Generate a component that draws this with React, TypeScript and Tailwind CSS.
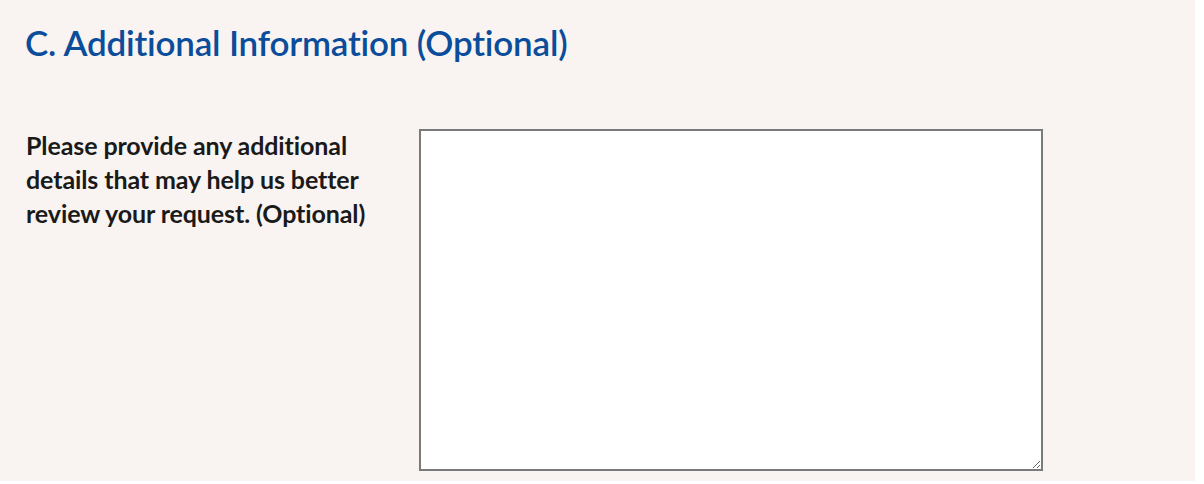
export default function App() {
  return (
    <div className="w-[1204px] h-[484px] bg-white overflow-hidden" style={{ fontFamily: 'Lato, "Noto Sans", sans-serif' }}>
      <div className="w-[1195px] h-[481px] bg-[#f9f4f1] pl-[25px] pt-[20px]">
        <h2 className="text-[35px] leading-[44px] font-semibold text-[#0b4d9a] tracking-[-0.2px]">C. Additional Information (Optional)</h2>
        <div className="flex items-start mt-[65px]">
          <div className="w-[394px] pl-[1px] -mt-[1px] text-[25px] leading-[34px] font-bold text-[#1a1a1a] tracking-[-0.1px]">
            Please provide any additional<br />details that may help us better<br />review your request. (Optional)
          </div>
          <textarea className="w-[624px] h-[342px] bg-white border-2 border-[#7a7a7a] outline-none resize" />
        </div>
      </div>
    </div>
  );
}
